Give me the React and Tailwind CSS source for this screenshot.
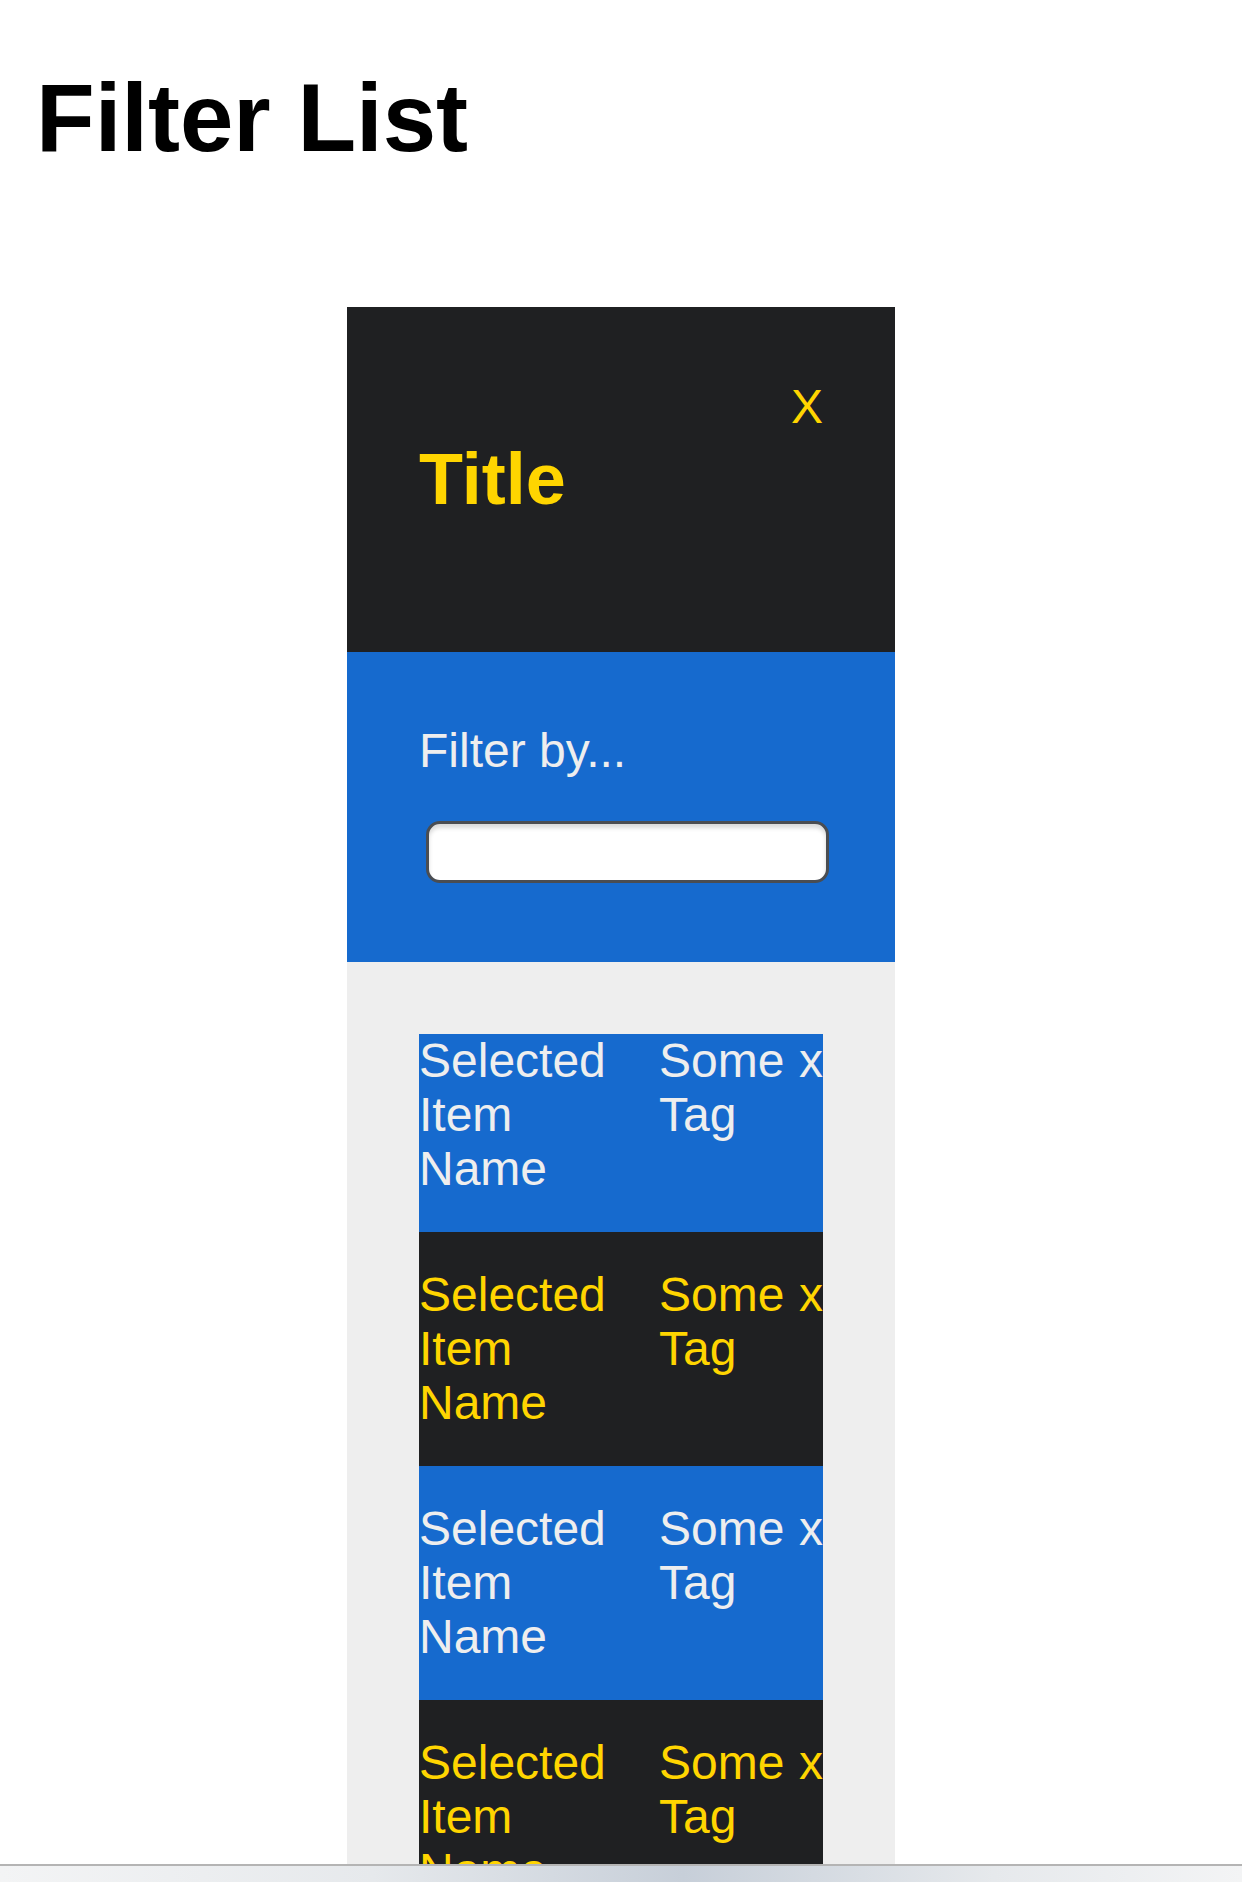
import React from "react";

const items = [
  { name: "Selected Item Name", tag: "Some Tag", dark: false },
  { name: "Selected Item Name", tag: "Some Tag", dark: true },
  { name: "Selected Item Name", tag: "Some Tag", dark: false },
  { name: "Selected Item Name", tag: "Some Tag", dark: true },
  { name: "Selected Item Name", tag: "Some Tag", dark: false },
  { name: "Selected Item Name", tag: "Some Tag", dark: true },
];

function SelectedItem({ name, tag, dark, first }) {
  return (
    <li
      className={`flex text-[48px] leading-[54px] pb-[36px] ${first ? "pt-0" : "pt-[36px]"} ${
        dark ? "bg-[#1f2022] text-[#ffd500]" : "bg-[#166ace] text-[#eeeeee]"
      }`}
    >
      <span className="w-[200px] mr-[40px] shrink-0">{name}</span>
      <span className="flex-1 min-w-0">{tag}</span>
      <span className="shrink-0">x</span>
    </li>
  );
}

export default function App() {
  return (
    <div className="min-h-[1882px] bg-white font-['Liberation_Sans',Arial,sans-serif] text-black">
      <h1 className="pl-[36px] pt-[63px] text-[96px] leading-[110px] font-bold">Filter List</h1>

      <div className="mx-auto mt-[134px] w-[548px]">
        <div className="h-[345px] bg-[#1f2022] px-[72px] pt-[72px]">
          <div className="text-right text-[48px] leading-[55px] text-[#ffd500]">X</div>
          <h2 className="mt-[4px] text-[72px] leading-[83px] font-bold text-[#ffd500]">Title</h2>
        </div>

        <div className="h-[310px] bg-[#166ace] px-[72px] pt-[71px]">
          <label className="block text-[48px] leading-[55px] text-[#eeeeee]">Filter by...</label>
          <input
            type="text"
            className="mt-[43px] ml-[7px] block h-[62px] w-[403px] rounded-[14px] border-[3px] border-[#4a4d52] bg-white shadow-[inset_0_4px_4px_rgba(0,0,0,0.15)] outline-none"
          />
        </div>

        <div className="bg-[#eeeeee] px-[72px] pt-[72px] pb-[72px]">
          <ul>
            {items.map((item, i) => (
              <SelectedItem key={i} {...item} first={i === 0} />
            ))}
          </ul>
        </div>
      </div>

      <div className="fixed bottom-0 left-0 right-0 h-[18px] border-t-2 border-[#b4b4b4] bg-[linear-gradient(90deg,#f3f4f5_0%,#e6e9ec_30%,#c7cfd9_55%,#e6e9ec_80%,#f3f4f5_100%)]" />
    </div>
  );
}
